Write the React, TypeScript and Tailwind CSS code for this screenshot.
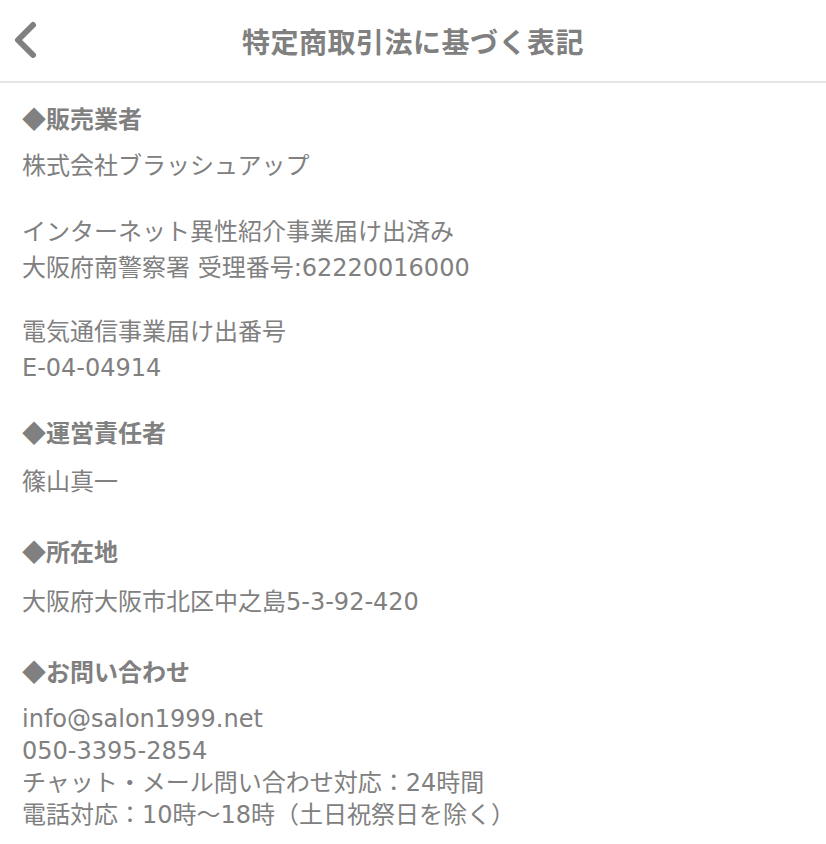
import React from 'react';

const cjk = { fontFamily: '"Noto Sans CJK JP", sans-serif' };

const Heading: React.FC<{ children: React.ReactNode; className?: string }> = ({ children, className = '' }) => (
  <h2 className={`text-[24px] leading-[36px] font-bold ${className}`}>
    <span className="leading-none" style={cjk}>◆</span>
    {children}
  </h2>
);

export default function App() {
  return (
    <div
      className="min-h-screen bg-white text-[#808080]"
      style={{ fontFamily: '"DejaVu Sans", "Noto Sans CJK JP", sans-serif' }}
    >
      {/* Header */}
      <header className="relative flex h-[83px] items-center justify-center border-b-2 border-[#e8e4e4]">
        <button className="absolute left-[11px] top-[20px] p-0">
          <svg width="28" height="40" viewBox="0 0 28 40" fill="none">
            <path d="M22 5 L7 20 L22 35" stroke="#808080" strokeWidth="6" strokeLinecap="round" strokeLinejoin="round" />
          </svg>
        </button>
        <h1 className="text-[28px] font-bold tracking-[0.5px]" style={cjk}>
          特定商取引法に基づく表記
        </h1>
      </header>

      {/* Body */}
      <main className="px-[22px] pt-[19px] text-[24px] leading-[36px]">
        <Heading className="mb-[10px]">販売業者</Heading>
        <p className="mb-[30px]">株式会社ブラッシュアップ</p>
        <p className="mb-[28px]">
          インターネット異性紹介事業届け出済み
          <br />
          大阪府南警察署 受理番号:62220016000
        </p>
        <p className="mb-[30px]">
          電気通信事業届け出番号
          <br />
          E-04-04914
        </p>

        <Heading className="mb-[12px]">運営責任者</Heading>
        <p className="mb-[35px]">篠山真一</p>

        <Heading className="mb-[13px]">所在地</Heading>
        <p className="mb-[35px]">大阪府大阪市北区中之島5-3-92-420</p>

        <Heading className="mb-[12px]">お問い合わせ</Heading>
        <p className="leading-[32px]">
          info@salon1999.net
          <br />
          050-3395-2854
          <br />
          チャット・メール問い合わせ対応：24時間
          <br />
          電話対応：10時〜18時（土日祝祭日を除く）
        </p>
      </main>
    </div>
  );
}
